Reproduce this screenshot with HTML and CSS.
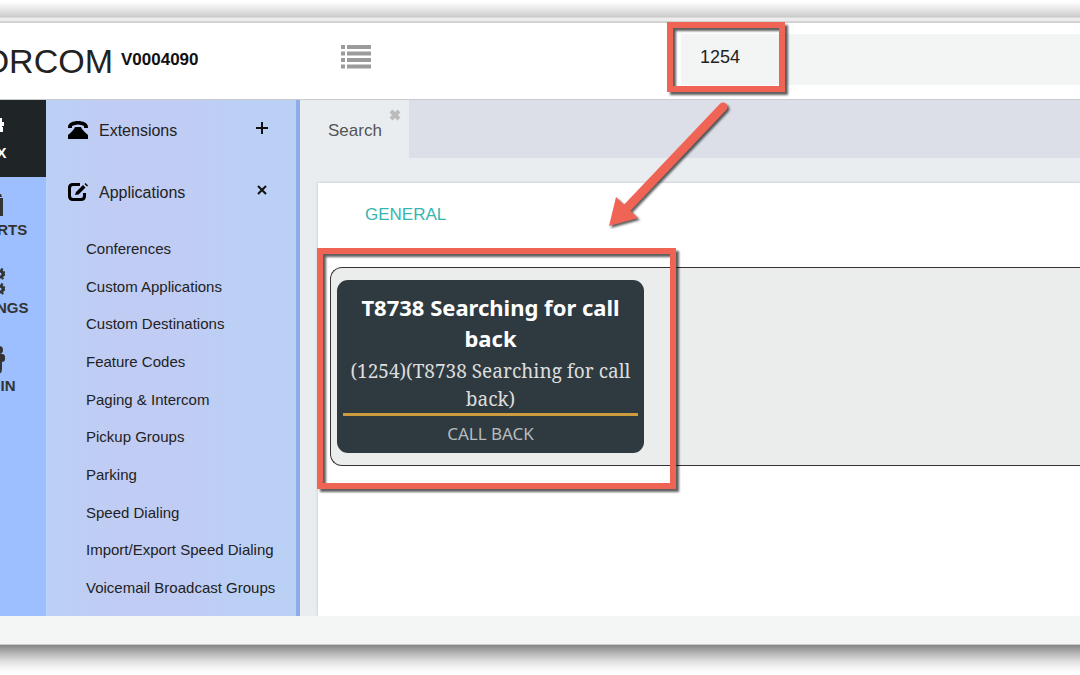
FILE: index.html
```html
<!DOCTYPE html>
<html lang="en">
<head>
<meta charset="utf-8">
<meta name="viewport" content="width=device-width, initial-scale=1">
<title>Xorcom PBX – Search</title>
<link rel="stylesheet" href="styles.css">
</head>
<body>
<div class="window-edge"></div>
<div class="shell">
  <header class="topbar">
    <div class="brand">
      <span class="brand-name">XORCOM</span>
      <span class="brand-version">V0004090</span>
    </div>
    <button class="menu-toggle" type="button" aria-label="Toggle menu">
      <svg class="list-icon" viewBox="0 0 30 24" aria-hidden="true">
        <path d="M0 0h4v4H0zM6 0h24v4H6zM0 6.5h4v4H0zM6 6.5h24v4H6zM0 13h4v4H0zM6 13h24v4H6zM0 19.500h4v4H0zM6 19.500h24v4H6z"/>
      </svg>
    </button>
    <div class="search">
      <input class="search-input" type="text" value="1254" aria-label="Search">
      <span class="callout callout-search"></span>
      <svg class="callout-arrow" viewBox="0 0 124 130" aria-hidden="true">
        <path class="arrow-line" d="M116 5L19 107"/>
        <path class="arrow-head" d="M2 124L9 95L31 116Z"/>
      </svg>
    </div>
  </header>

  <div class="workspace">
    <nav class="rail" aria-label="Sections">
      <a class="rail-item rail-item-active" href="#">
        <svg class="rail-icon" viewBox="0 0 28 28" aria-hidden="true"><path d="M3 10h16v5H3zM18 5h7v4h2v4h-2v1h1v5h-3v-4h-5z"/></svg>
        <span>PBX</span>
      </a>
      <a class="rail-item" href="#">
        <svg class="rail-icon" viewBox="0 0 28 28" aria-hidden="true"><path d="M2 8h24v18H2zM18 4h6l1 3h-7z"/></svg>
        <span>REPORTS</span>
      </a>
      <a class="rail-item" href="#">
        <svg class="rail-icon" viewBox="0 0 28 28" aria-hidden="true">
          <circle cx="9" cy="14" r="7"/>
          <g class="gear"><circle cx="23" cy="6" r="3"/><circle cx="23" cy="21" r="3"/></g>
          <g class="gear-teeth"><circle cx="23" cy="6" r="5"/><circle cx="23" cy="21" r="5"/></g>
        </svg>
        <span>SETTINGS</span>
      </a>
      <a class="rail-item" href="#">
        <svg class="rail-icon" viewBox="0 0 28 28" aria-hidden="true"><circle cx="22" cy="4" r="4"/><rect x="15" y="8" width="13" height="8" rx="3"/><path d="M4 15h21v8q0 5-4 5H4z"/></svg>
        <span>ADMIN</span>
      </a>
    </nav>

    <nav class="menu" aria-label="PBX menu">
      <button class="menu-group" type="button">
        <svg class="menu-icon" viewBox="0 0 20 18" aria-hidden="true"><path d="M0 6C0 2 5 0 10 0s10 2 10 6v1h-4V5Q10 2 4 5v2H0zM7 6h6q1 3 7 8v4H0v-4q6-5 7-8z"/></svg>
        <span class="menu-title">Extensions</span>
        <svg class="menu-sign" viewBox="0 0 12 12" aria-hidden="true"><path d="M6 0v12M0 6h12"/></svg>
      </button>
      <button class="menu-group" type="button">
        <svg class="menu-icon" viewBox="0 0 20 18" aria-hidden="true"><path class="edit-frame" d="M12 1.500H5Q1.500 1.500 1.500 5v8q0 3.500 3.500 3.500h8q3.500 0 3.500-3.500v-3"/><path d="M8 9l7-7 2.500 2.500-7 7L7 12zM16.500 1l1-1L20 2.500l-1 1z"/></svg>
        <span class="menu-title">Applications</span>
        <svg class="menu-sign" viewBox="0 0 12 12" aria-hidden="true"><path d="M2 2l8 8M10 2l-8 8"/></svg>
      </button>
      <ul class="submenu">
        <li><a href="#">Conferences</a></li>
        <li><a href="#">Custom Applications</a></li>
        <li><a href="#">Custom Destinations</a></li>
        <li><a href="#">Feature Codes</a></li>
        <li><a href="#">Paging &amp; Intercom</a></li>
        <li><a href="#">Pickup Groups</a></li>
        <li><a href="#">Parking</a></li>
        <li><a href="#">Speed Dialing</a></li>
        <li><a href="#">Import/Export Speed Dialing</a></li>
        <li><a href="#">Voicemail Broadcast Groups</a></li>
      </ul>
    </nav>

    <main class="content">
      <div class="tabs">
        <div class="tab">
          <span>Search</span>
          <button class="tab-close" type="button" aria-label="Close tab">
            <svg viewBox="0 0 12 12" aria-hidden="true"><path d="M2 2l8 8M10 2l-8 8"/></svg>
          </button>
        </div>
      </div>
      <section class="panel">
        <h2 class="panel-title">GENERAL</h2>
        <div class="results">
          <a class="tile" href="#">
            <strong class="tile-title">T8738 Searching for call back</strong>
            <span class="tile-detail">(1254)(T8738 Searching for call back)</span>
            <span class="tile-type">CALL BACK</span>
          </a>
          <span class="callout callout-result"></span>
        </div>
      </section>
    </main>
  </div>
  <footer class="footer"></footer>
</div>
<div class="window-shadow"></div>
</body>
</html>
```
FILE: styles.css
```css
* {
  box-sizing: border-box;
}

body {
  margin: 0;
  min-height: 100vh;
  display: flex;
  flex-direction: column;
  overflow: hidden;
  background: #fff;
  color: #222;
  font-family: "Liberation Sans", Arial, sans-serif;
}

a {
  color: inherit;
  text-decoration: none;
}

button {
  padding: 0;
  border: 0;
  background: none;
  color: inherit;
  font: inherit;
}

.window-edge {
  height: 23px;
  border-bottom: 2px solid #d2d2d2;
  background: linear-gradient(#fff 0, #fff 2px, #e4e4e4 10px, #cacaca 17px, #ececec 18px);
}

.window-shadow {
  height: 30px;
  background: linear-gradient(#858585, #b4b4b4 8px, #dedede 16px, #f6f6f6 23px, #fff 28px);
}

/* The window starts beyond the left edge of the viewport. */
.shell {
  flex: 1;
  display: flex;
  flex-direction: column;
  margin-left: -64px;
  border-bottom: 1px solid #ccc;
  background: #fff;
}

.topbar {
  display: flex;
  align-items: center;
  padding: 11px 0 14px;
  border-bottom: 1px solid #c9cbd3;
}

.brand {
  flex: 0 0 405px;
  display: flex;
  align-items: center;
  gap: 8px;
  padding-left: 24px;
}

.brand-name {
  padding-top: 3px;
  font-size: 34px;
  line-height: 44px;
}

.brand-version {
  color: #111;
  font-size: 17px;
  font-weight: bold;
}

.menu-toggle {
  padding-bottom: 5px;
}

.list-icon {
  display: block;
  width: 30px;
  height: 24px;
  fill: #9b9b9b;
}

.search {
  position: relative;
  flex: 1;
  margin-left: 310px;
}

.search-input {
  display: block;
  width: 100%;
  padding: 13px 19px 17px;
  border: 0;
  background: #f3f5f5;
  color: #222;
  font-family: inherit;
  font-size: 18px;
  line-height: 21px;
}

.callout {
  position: absolute;
  z-index: 2;
  border: 6px solid #f06455;
  filter: drop-shadow(3px 3px 1px #000000a0);
  pointer-events: none;
}

.callout-search {
  left: -14px;
  top: -12px;
  width: 118px;
  height: 70px;
}

.callout-arrow {
  position: absolute;
  z-index: 3;
  left: -74px;
  top: 68px;
  width: 124px;
  height: 130px;
  filter: drop-shadow(2px 2px 1px #000000a0);
  pointer-events: none;
}

.arrow-line {
  stroke: #f06455;
  stroke-width: 9;
  stroke-linecap: round;
}

.arrow-head {
  fill: #f06455;
}

.workspace {
  flex: 1;
  display: flex;
}

.rail {
  flex: 0 0 110px;
  background: #9dbfff;
  color: #333;
  font-size: 15px;
  font-weight: bold;
}

.rail-item {
  display: flex;
  flex-direction: column;
  align-items: center;
  gap: 3px;
  padding: 13px 0 16px;
  line-height: 18px;
}

.rail-item-active {
  padding-bottom: 15px;
  background: #1f2427;
  color: #fff;
}

.rail-icon {
  width: 28px;
  height: 28px;
  fill: currentColor;
}

.gear {
  fill: none;
  stroke: currentColor;
  stroke-width: 3;
}

.gear-teeth {
  fill: none;
  stroke: currentColor;
  stroke-width: 2;
  stroke-dasharray: 2 2;
}

.menu {
  flex: 0 0 254px;
  display: flex;
  flex-direction: column;
  border-right: 4px solid #8eade8;
  background: linear-gradient(90deg, #bbd0f5, #c0ccf4 25%, #c0ccf4 55%, #bbd0f5 80%);
}

.menu-group {
  display: flex;
  align-items: center;
  padding: 20px 28px 20px 22px;
  font-size: 16px;
  line-height: 22px;
}

.menu-icon {
  width: 20px;
  height: 18px;
  margin: 0 11px 3px 0;
}

.edit-frame {
  fill: none;
  stroke: #000;
  stroke-width: 3;
}

.menu-title {
  flex: 1;
  text-align: left;
}

.menu-sign {
  width: 12px;
  height: 12px;
  margin-bottom: 6px;
  stroke: #111;
  stroke-width: 2;
}

.submenu {
  flex: 1;
  display: flex;
  flex-direction: column;
  justify-content: space-between;
  margin: 0;
  padding: 15px 0 18px 40px;
  list-style: none;
  font-size: 15px;
  line-height: 20px;
}

.content {
  flex: 1;
  display: flex;
  flex-direction: column;
  background: #e9edf0;
}

.tabs {
  display: flex;
  background: #dcdfe7;
}

.tab {
  display: flex;
  align-items: flex-start;
  gap: 7px;
  padding: 9px 8px 16px 28px;
  background: #e9edf0;
  color: #555;
  font-size: 17px;
}

.tab span {
  padding-top: 11px;
  line-height: 22px;
}

.tab-close svg {
  display: block;
  width: 12px;
  height: 12px;
  stroke: #bbb;
  stroke-width: 4;
}

.panel {
  flex: 1;
  margin: 25px 0 0 18px;
  background: #fff;
  box-shadow: 0 0 3px #00000030;
}

.panel-title {
  margin: 0;
  padding: 21px 47px 20px;
  color: #36b5b0;
  font-size: 17px;
  font-weight: normal;
  line-height: 22px;
}

.results {
  position: relative;
  margin: 21px 0 0 12px;
  padding: 12px 6px;
  border: 1px solid #333;
  border-right: 0;
  border-radius: 12px 0 0 12px;
  background: #ebeded;
}

.tile {
  display: flex;
  flex-direction: column;
  width: 307px;
  padding: 12px 6px 6px;
  border-radius: 11px;
  background: #2f3a40;
  color: #fff;
  text-align: center;
}

.tile-title {
  padding-bottom: 3px;
  font: bold 22px/31px "Noto Sans", sans-serif;
}

.tile-detail {
  border-bottom: 3px solid #cc9b3d;
  color: #ddd;
  font: 19px/28px "Noto Serif", "Liberation Serif", serif;
}

.tile-type {
  padding-top: 5px;
  color: #b9bcbe;
  font: 17px/26px "Noto Sans", sans-serif;
}

.callout-result {
  left: -14px;
  top: -20px;
  width: 359px;
  height: 241px;
}

.footer {
  height: 28px;
  background: #f4f6f6;
}
```
